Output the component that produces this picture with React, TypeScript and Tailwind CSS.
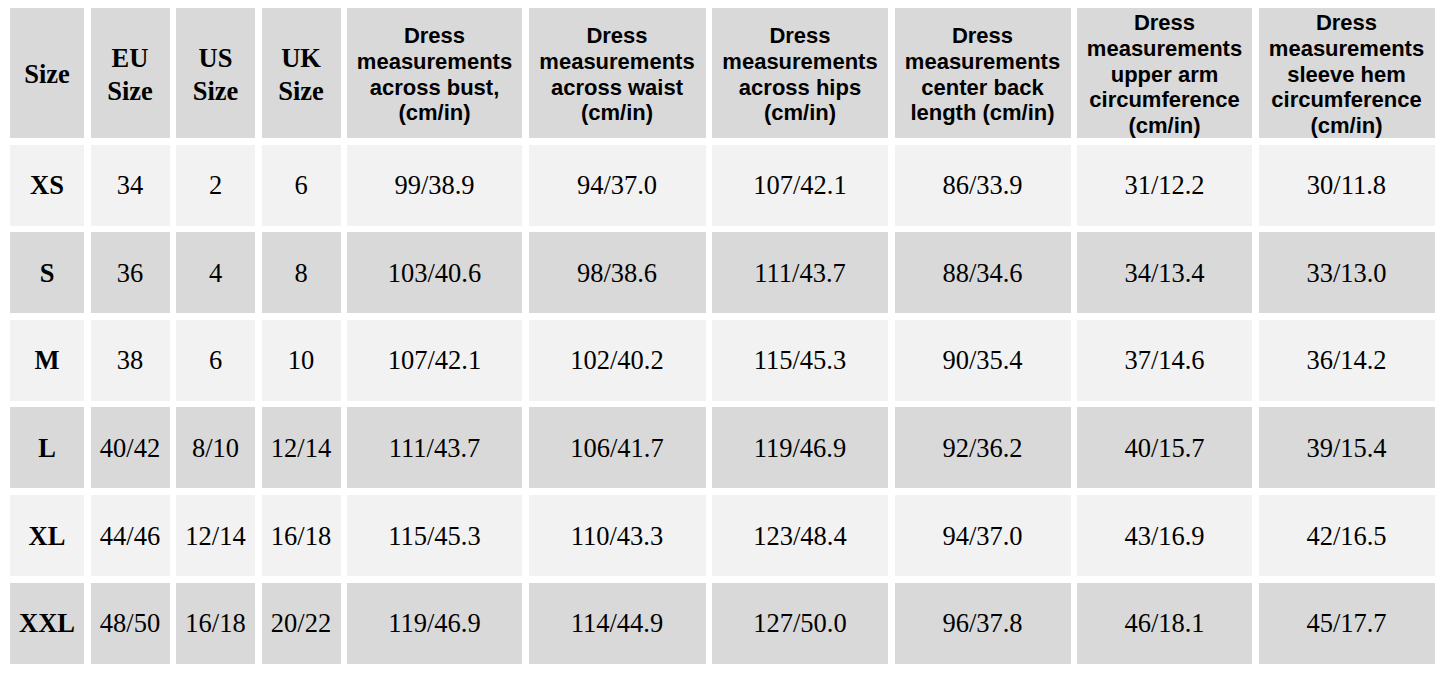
import React from "react";

const serif = "font-['Liberation_Serif','Times_New_Roman',serif]";
const sans = "font-['Liberation_Sans',Arial,sans-serif]";

const headers: string[][] = [
  ["Size"],
  ["EU", "Size"],
  ["US", "Size"],
  ["UK", "Size"],
  ["Dress", "measurements", "across bust,", "(cm/in)"],
  ["Dress", "measurements", "across waist", "(cm/in)"],
  ["Dress", "measurements", "across hips", "(cm/in)"],
  ["Dress", "measurements", "center back", "length (cm/in)"],
  ["Dress", "measurements", "upper arm", "circumference", "(cm/in)"],
  ["Dress", "measurements", "sleeve hem", "circumference", "(cm/in)"],
];

const rows: string[][] = [
  ["XS", "34", "2", "6", "99/38.9", "94/37.0", "107/42.1", "86/33.9", "31/12.2", "30/11.8"],
  ["S", "36", "4", "8", "103/40.6", "98/38.6", "111/43.7", "88/34.6", "34/13.4", "33/13.0"],
  ["M", "38", "6", "10", "107/42.1", "102/40.2", "115/45.3", "90/35.4", "37/14.6", "36/14.2"],
  ["L", "40/42", "8/10", "12/14", "111/43.7", "106/41.7", "119/46.9", "92/36.2", "40/15.7", "39/15.4"],
  ["XL", "44/46", "12/14", "16/18", "115/45.3", "110/43.3", "123/48.4", "94/37.0", "43/16.9", "42/16.5"],
  ["XXL", "48/50", "16/18", "20/22", "119/46.9", "114/44.9", "127/50.0", "96/37.8", "46/18.1", "45/17.7"],
];

export default function App() {
  return (
    <div className="w-[1445px] h-[674px] bg-white pt-[8px] pl-[10px] text-black overflow-hidden">
      <div className="grid grid-cols-[74px_79px_79px_79px_175px_177px_176px_176px_175px_176px] grid-rows-[130px_repeat(6,81px)] gap-x-[6.5px] gap-y-[6.6px]">
        {headers.map((lines, i) => (
          <div
            key={"h" + i}
            className={
              "bg-[#d9d9d9] flex flex-col items-center justify-center text-center font-bold whitespace-nowrap pt-[3px] " +
              (i < 4
                ? serif + " text-[26.5px] leading-[33px]"
                : sans + " text-[22px] leading-[25.8px]")
            }
          >
            {lines.map((l, j) => (
              <span key={j}>{l}</span>
            ))}
          </div>
        ))}
        {rows.map((r, ri) =>
          r.map((c, ci) => (
            <div
              key={ri + "-" + ci}
              className={
                (ri % 2 === 0 ? "bg-[#f2f2f2] " : "bg-[#d9d9d9] ") +
                serif +
                " flex items-center justify-center pt-[2px] text-[26.5px] whitespace-nowrap " +
                (ci === 0 ? "font-bold" : "font-normal")
              }
            >
              {c}
            </div>
          ))
        )}
      </div>
    </div>
  );
}
